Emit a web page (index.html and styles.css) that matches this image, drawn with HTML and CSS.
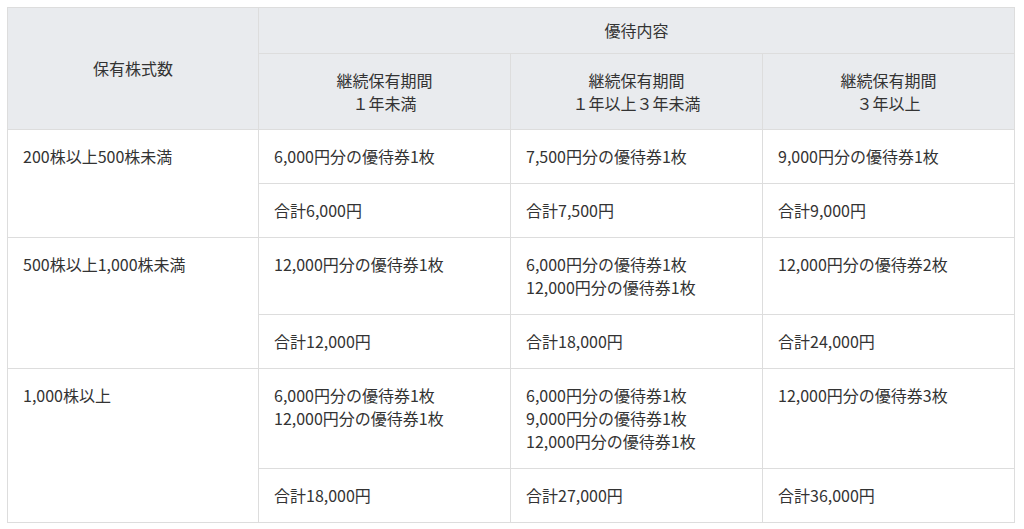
FILE: index.html
```html
<!DOCTYPE html>
<html lang="ja">
<head>
<meta charset="utf-8">
<link rel="stylesheet" href="styles.css">
</head>
<body>
<table class="yutai">
  <colgroup>
    <col class="c1"><col class="c"><col class="c"><col class="c">
  </colgroup>
  <thead>
    <tr>
      <th rowspan="2" class="left-head">保有株式数</th>
      <th colspan="3" class="top-head">優待内容</th>
    </tr>
    <tr>
      <th class="sub-head">継続保有期間<br>１年未満</th>
      <th class="sub-head">継続保有期間<br>１年以上３年未満</th>
      <th class="sub-head">継続保有期間<br>３年以上</th>
    </tr>
  </thead>
  <tbody>
    <tr>
      <td rowspan="2">200株以上500株未満</td>
      <td>6,000円分の優待券1枚</td>
      <td>7,500円分の優待券1枚</td>
      <td>9,000円分の優待券1枚</td>
    </tr>
    <tr>
      <td>合計6,000円</td>
      <td>合計7,500円</td>
      <td>合計9,000円</td>
    </tr>
    <tr>
      <td rowspan="2">500株以上1,000株未満</td>
      <td>12,000円分の優待券1枚</td>
      <td>6,000円分の優待券1枚<br>12,000円分の優待券1枚</td>
      <td>12,000円分の優待券2枚</td>
    </tr>
    <tr>
      <td>合計12,000円</td>
      <td>合計18,000円</td>
      <td>合計24,000円</td>
    </tr>
    <tr>
      <td rowspan="2">1,000株以上</td>
      <td>6,000円分の優待券1枚<br>12,000円分の優待券1枚</td>
      <td>6,000円分の優待券1枚<br>9,000円分の優待券1枚<br>12,000円分の優待券1枚</td>
      <td>12,000円分の優待券3枚</td>
    </tr>
    <tr>
      <td>合計18,000円</td>
      <td>合計27,000円</td>
      <td>合計36,000円</td>
    </tr>
  </tbody>
</table>
</body>
</html>
```
FILE: styles.css
```css
html, body {
  margin: 0;
  padding: 0;
  background: #fff;
}
body {
  padding: 7px;
  font-family: "Noto Sans CJK JP", "Noto Sans", sans-serif;
  font-size: 16px;
  line-height: 23px;
  color: #333;
}
.yutai {
  border-collapse: collapse;
  width: 1008px;
  table-layout: fixed;
}
.c1 { width: 251px; }
.c { width: 252px; }
.yutai th,
.yutai td {
  border: 1px solid #dddddd;
  padding: 15px 15px;
  vertical-align: top;
  text-align: left;
  font-weight: normal;
}
.yutai th {
  background: #e9ebee;
  text-align: center;
  vertical-align: middle;
}
.yutai th.top-head {
  padding: 11px 15px;
}
.yutai th.sub-head {
  padding: 15px 15px 14px;
}
```
